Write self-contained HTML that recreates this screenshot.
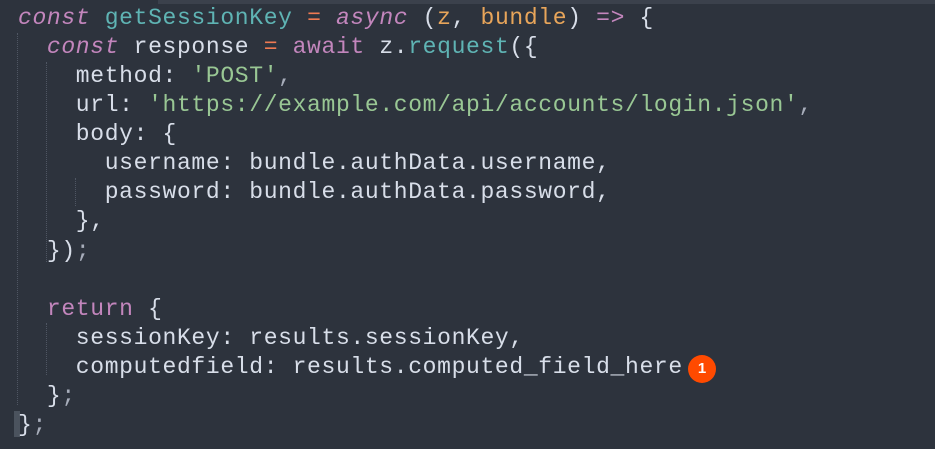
<!DOCTYPE html>
<html><head><style>
html,body{margin:0;padding:0;}
body{width:935px;height:449px;background:#2d333d;position:relative;overflow:hidden;}
.bar{position:absolute;left:158px;top:0;width:777px;height:4px;background:#3b414c;}
.code{position:absolute;left:18px;top:4px;font-family:"Liberation Mono",monospace;font-size:23px;letter-spacing:0.65px;line-height:29.07px;color:#d8dee9;white-space:pre;}
.k{color:#c386bd;font-style:italic;}
.kw{color:#c386bd;}
.f{color:#5fb4b4;}
.o{color:#f07a52;}
.p{color:#e8a55a;}
.s{color:#99c794;}
.g{color:#a7adba;}
.guide{position:absolute;width:0;border-left:1px dotted #4f5663;}
.gut{position:absolute;left:14px;top:411px;width:6px;height:26px;background:#4b535e;}
.badge{position:absolute;left:688px;top:355px;width:28px;height:28px;border-radius:50%;background:#ff4a00;color:#fff;font-family:"Liberation Sans",sans-serif;font-weight:bold;font-size:15px;line-height:28px;text-align:center;}
</style></head><body>
<div class="bar"></div>
<div class="guide" style="left:17px;top:33px;height:372px;"></div>
<div class="guide" style="left:46px;top:62px;height:200px;"></div>
<div class="guide" style="left:46px;top:323px;height:52px;"></div>
<div class="guide" style="left:75px;top:178px;height:28px;"></div>
<div class="gut"></div>
<div class="code"><span class="k">const</span> <span class="f">getSessionKey</span> <span class="o">=</span> <span class="k">async</span> (<span class="p">z</span>, <span class="p">bundle</span>) <span class="kw">=&gt;</span> {
  <span class="k">const</span> response <span class="o">=</span> <span class="kw">await</span> z.<span class="f">request</span>({
    method: <span class="s">'POST'</span><span class="g">,</span>
    url: <span class="s">'https://example.com/api/accounts/login.json'</span><span class="g">,</span>
    body: {
      username: bundle.authData.username,
      password: bundle.authData.password,
    },
  })<span class="g">;</span>

  <span class="kw">return</span> {
    sessionKey: results.sessionKey,
    computedfield: results.computed_field_here
  }<span class="g">;</span>
}<span class="g">;</span></div>
<div class="badge">1</div>
</body></html>
